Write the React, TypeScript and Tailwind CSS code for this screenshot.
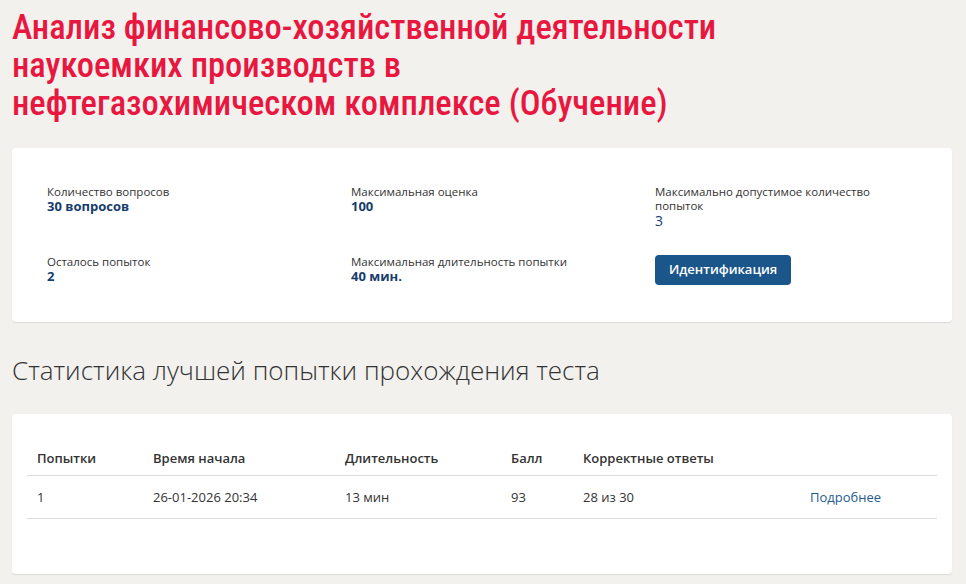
import React from "react"

const info = [
  { label: "Количество вопросов", value: "30 вопросов" },
  { label: "Максимальная оценка", value: "100" },
  { label: "Максимально допустимое количество попыток", value: "3", light: true },
  { label: "Осталось попыток", value: "2" },
  { label: "Максимальная длительность попытки", value: "40 мин." },
]

const cols = ["Попытки", "Время начала", "Длительность", "Балл", "Корректные ответы", ""]
const widths = ["w-[116px]", "w-[192px]", "w-[166px]", "w-[72px]", "w-[227px]", ""]

export default function App() {
  return (
    <div className="min-h-[584px] bg-[#f2f1ee] pl-3 pr-[14px] pt-[8px] pb-2 font-['Open_Sans',sans-serif] text-[#333]">
      {/* заголовок курса */}
      <h1 className="font-['Liberation_Sans_Narrow','Roboto_Condensed',Roboto,sans-serif] text-[34.5px] font-medium leading-[38px] text-[#e8173f]">
        Анализ финансово-хозяйственной деятельности
        <br />
        наукоемких производств в
        <br />
        нефтегазохимическом комплексе (Обучение)
      </h1>

      <div className="mt-[26px] rounded bg-white px-[35px] pt-[37px] pb-[27px] shadow-[0_1px_1px_rgba(0,0,0,0.1)]">
        <div className="grid grid-cols-[304px_304px_1fr] gap-y-[27px]">
          {info.map((item) => (
            <div key={item.label} className="min-h-[40px]">
              <div className="max-w-[230px] text-[11.5px] leading-[14px] text-[#333]">{item.label}</div>
              <div
                className={`leading-[15px] text-[#163d6c] ${item.light ? "text-[14px] font-normal" : "text-[13px] font-bold"}`}
              >
                {item.value}
              </div>
            </div>
          ))}
          <div>
            <button className="h-[30px] rounded bg-[#1b568a] px-[14px] text-[13px] font-semibold text-white">
              Идентификация
            </button>
          </div>
        </div>
      </div>

      <h2 className="mt-[31px] text-[26px] font-light leading-[34px] text-[#333]">
        Статистика лучшей попытки прохождения теста
      </h2>

      <div className="mt-[27px] rounded bg-white px-[15px] pt-[27px] pb-[55px] shadow-[0_1px_1px_rgba(0,0,0,0.1)]">
        <table className="w-full border-collapse text-left text-[13px] leading-[18px]">
          <thead>
            <tr className="border-b border-[#dedcd8]">
              {cols.map((c, i) => (
                <th key={i} className={`pt-[8px] pb-[8px] pl-[10px] font-semibold ${widths[i]}`}>
                  {c}
                </th>
              ))}
            </tr>
          </thead>
          <tbody>
            <tr className="border-b border-[#dedcd8]">
              <td className="py-[12px] pl-[10px]">1</td>
              <td className="py-[12px] pl-[10px]">26-01-2026 20:34</td>
              <td className="py-[12px] pl-[10px]">13 мин</td>
              <td className="py-[12px] pl-[10px]">93</td>
              <td className="py-[12px] pl-[10px]">28 из 30</td>
              <td className="py-[12px] pl-[10px]">
                <a className="text-[#1f5c8f]">Подробнее</a>
              </td>
            </tr>
          </tbody>
        </table>
      </div>
    </div>
  )
}
